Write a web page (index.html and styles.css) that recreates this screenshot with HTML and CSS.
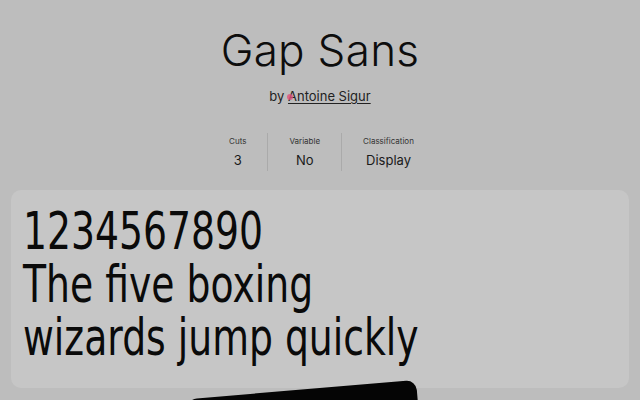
FILE: index.html
```html
<!DOCTYPE html>
<html>
<head>
<meta charset="utf-8">
<link rel="stylesheet" href="styles.css">
</head>
<body>
<header class="head">
  <h1 class="title">Gap Sans</h1>
  <p class="byline">by <a class="author" href="#"><span class="mark"></span>Antoine Sigur</a></p>
</header>
<section class="stats">
  <div class="stat"><span class="label">Cuts</span><span class="value">3</span></div>
  <div class="stat"><span class="label">Variable</span><span class="value">No</span></div>
  <div class="stat"><span class="label">Classification</span><span class="value">Display</span></div>
</section>
<section class="card">
  <p class="sample">1234567890<br>The five boxing<br>wizards jump quickly</p>
</section>
<div class="tag"></div>
</body>
</html>
```
FILE: styles.css
```css
html, body { margin: 0; padding: 0; }
body {
  width: 640px;
  height: 400px;
  overflow: hidden;
  background: #bdbdbd;
  font-family: Inter, "Liberation Sans", sans-serif;
  color: #111;
  position: relative;
}
.head { display: flex; flex-direction: column; align-items: center; padding-top: 24px; }
.title { margin: 0; font-weight: 300; font-size: 44px; line-height: 52px; letter-spacing: 0.3px; color: #0d0d0d; }
.byline { margin: 11px 0 0; font-size: 13px; line-height: 18px; color: #222; }
.author { color: #222; text-decoration: underline; text-underline-offset: 2px; text-decoration-thickness: 1px; position: relative; }
.mark { position: absolute; left: -1px; top: 6px; width: 6px; height: 6px; background: #e0507a; border-radius: 50%; opacity: .8; }
.stats { display: flex; justify-content: center; margin-top: 28px; margin-left: 3px; }
.stat { display: flex; flex-direction: column; align-items: center; padding: 3px 21px; gap: 5px; border-left: 1px solid #aaa; }
.stat:first-child { border-left: none; }
.label { font-size: 8px; line-height: 11px; color: #333; }
.value { font-size: 13px; line-height: 16px; color: #1a1a1a; }
.card {
  margin: 19px 11px 0;
  height: 198px;
  background: #c6c6c6;
  border-radius: 10px;
  padding: 15px 12px;
  box-sizing: border-box;
}
.sample {
  margin: 0;
  font-family: "DejaVu Sans", sans-serif;
  font-size: 51px;
  line-height: 53px;
  color: #0a0a0a;
  transform: scaleX(0.74);
  transform-origin: left top;
  white-space: nowrap;
}
.tag {
  position: absolute;
  left: 186px;
  top: 380px;
  width: 230px;
  height: 80px;
  background: #050505;
  border-radius: 10px;
  transform: rotate(-4.8deg);
  transform-origin: top right;
}
```
